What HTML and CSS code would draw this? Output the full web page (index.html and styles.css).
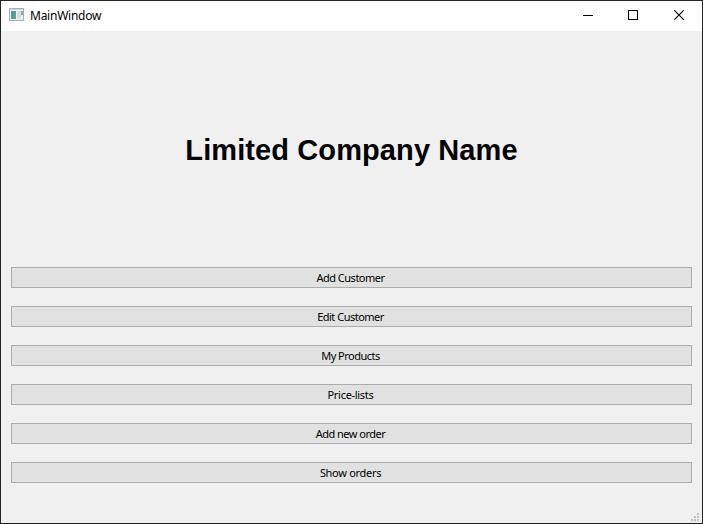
FILE: index.html
```html
<!DOCTYPE html>
<html lang="en">
<head>
<meta charset="utf-8">
<title>MainWindow</title>
<link rel="stylesheet" href="styles.css">
</head>
<body>
<div class="window">
  <header class="titlebar">
    <svg class="app-icon" width="16" height="14" viewBox="0 0 16 14">
      <defs><linearGradient id="pane" x1="0" y1="0" x2="1" y2="1"><stop offset="0" stop-color="#5486b4"/><stop offset="1" stop-color="#55b187"/></linearGradient></defs>
      <rect x=".5" y=".5" width="14" height="12" fill="#f1f2f3" stroke="#a9afb4"/>
      <path d="M1 1.5h13" stroke="#cbd2d8"/>
      <rect x="2" y="3" width="5" height="8" fill="url(#pane)"/>
      <rect x="8" y="3" width="4" height="8" fill="#dadddf"/>
      <rect x="12" y="3" width="2" height="4" fill="#83aaa9"/>
    </svg>
    <span class="title">MainWindow</span>
    <div class="controls">
      <svg width="11" height="11"><path d="M1 5.5h10" stroke="#000"/></svg>
      <svg width="11" height="11"><rect x=".5" y=".5" width="9" height="9" fill="none" stroke="#000"/></svg>
      <svg width="11" height="11"><path d="M.2 .2l9.6 9.6M9.8 .2l-9.6 9.6" stroke="#000" stroke-width="1.1"/></svg>
    </div>
  </header>
  <main class="content">
    <h1 class="company">Limited Company Name</h1>
    <div class="actions">
      <button class="action">Add Customer</button>
      <button class="action">Edit Customer</button>
      <button class="action">My Products</button>
      <button class="action action-loose">Price-lists</button>
      <button class="action">Add new order</button>
      <button class="action action-loose">Show orders</button>
    </div>
    <svg class="grip" width="8" height="8" fill="#bfbfbf"><path d="M6 0h2v2h-2zM3 3h2v2h-2zM6 3h2v2h-2zM0 6h2v2h-2zM3 6h2v2h-2zM6 6h2v2h-2z"/></svg>
  </main>
</div>
</body>
</html>
```
FILE: styles.css
```css
* { box-sizing: border-box; }
body { margin: 0; }
.window {
  width: 703px;
  height: 524px;
  display: flex;
  flex-direction: column;
  border: 1px solid #242424;
  background: #f0f0f0;
  color: #000;
  overflow: hidden;
}
.titlebar {
  height: 30px;
  display: flex;
  align-items: center;
  padding: 0 17px 0 8px;
  background: #fff;
}
.app-icon { margin: 0 5px 2px 0; }
.title {
  font: 12px/16px "Noto Sans", sans-serif;
  letter-spacing: -0.25px;
}
.controls {
  display: flex;
  gap: 35px;
  margin: 0 0 1px auto;
}
.content {
  flex: 1;
  display: flex;
  flex-direction: column;
  padding: 0 10px;
}
.company {
  height: 236px;
  margin: 0;
  font: bold 29px/238px "Liberation Sans", Arial, sans-serif;
  letter-spacing: 0.1px;
  text-align: center;
}
.actions {
  display: flex;
  flex-direction: column;
  gap: 18px;
}
.action {
  height: 21px;
  padding: 0 2px 0 0;
  border: 1px solid #adadad;
  border-radius: 0;
  background: #e1e1e1;
  color: #000;
  font: 11px/19px "Noto Sans", Tahoma, sans-serif;
  letter-spacing: -0.5px;
  text-align: center;
}
.action-loose { letter-spacing: -0.3px; }
.grip {
  align-self: flex-end;
  margin: auto -7px 2px 0;
}
```
